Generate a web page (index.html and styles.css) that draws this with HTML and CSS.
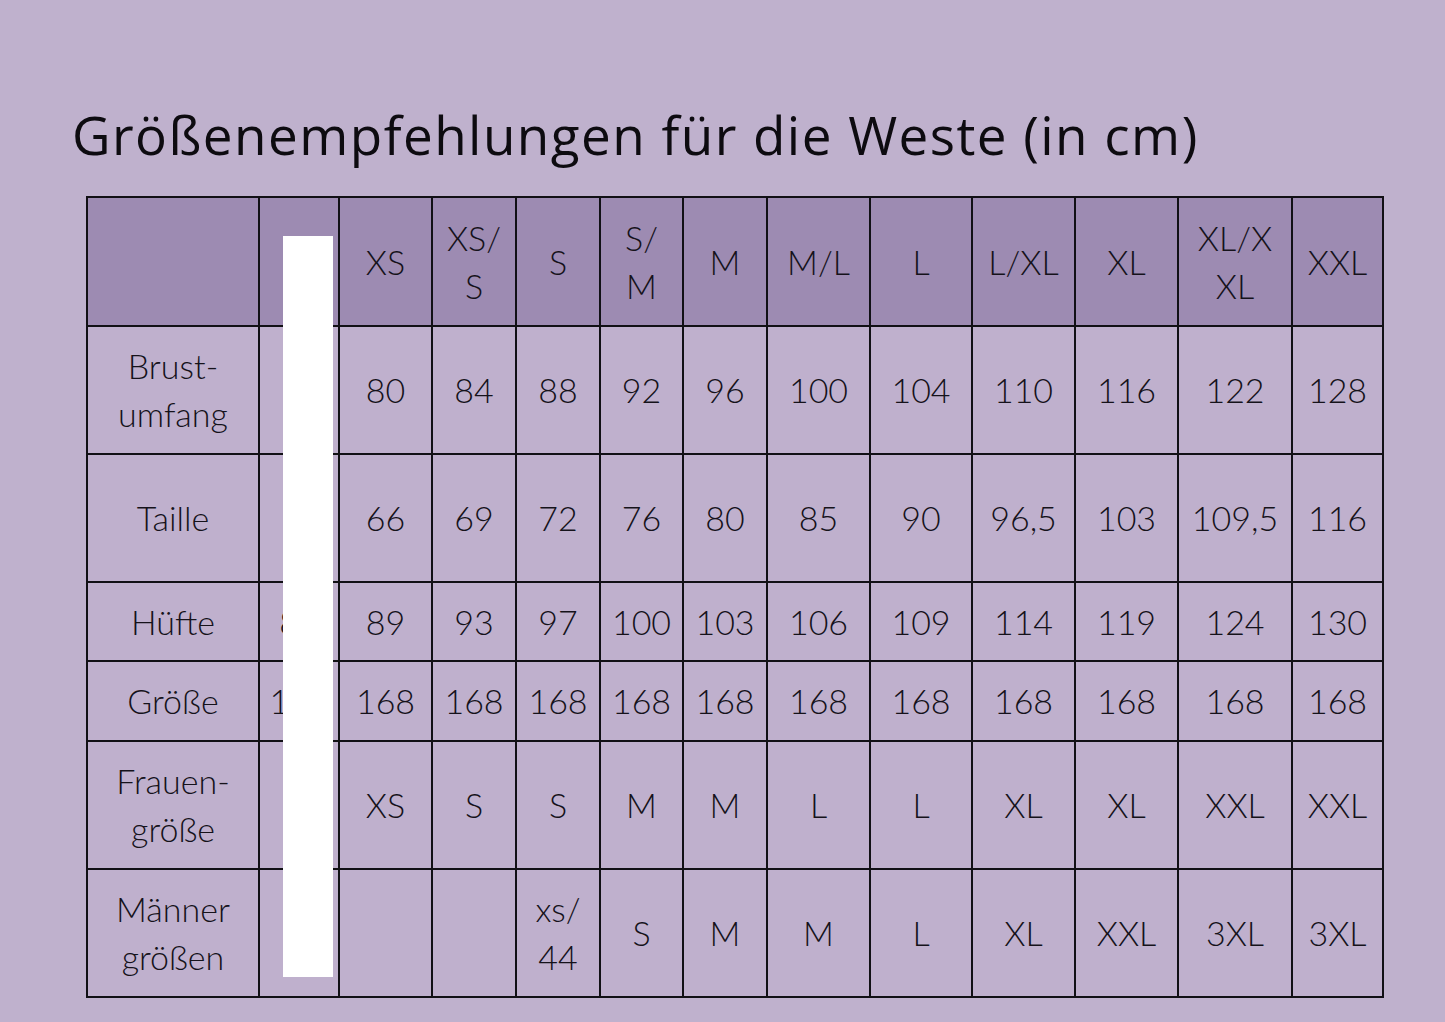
FILE: index.html
```html
<!DOCTYPE html>
<html lang="de">
<head>
<meta charset="utf-8">
<title>Größenempfehlungen</title>
<link rel="stylesheet" href="styles.css">
</head>
<body>
<main class="page">
  <h1 class="title">Größenempfehlungen für die Weste (in cm)</h1>
  <div class="table-wrap">
    <table class="sizes">
      <colgroup>
        <col class="c-label"><col class="c2"><col class="c3"><col class="c4"><col class="c5"><col class="c6"><col class="c7"><col class="c8"><col class="c9"><col class="c10"><col class="c11"><col class="c12"><col class="c13">
      </colgroup>
      <tr class="head first">
        <td></td><td></td><td>XS</td><td>XS/<br>S</td><td>S</td><td>S/<br>M</td><td>M</td><td>M/L</td><td>L</td><td>L/XL</td><td>XL</td><td>XL/X<br>XL</td><td>XXL</td>
      </tr>
      <tr class="tall">
        <td>Brust-<br>umfang</td><td></td><td>80</td><td>84</td><td>88</td><td>92</td><td>96</td><td>100</td><td>104</td><td>110</td><td>116</td><td>122</td><td>128</td>
      </tr>
      <tr class="tall">
        <td>Taille</td><td></td><td>66</td><td>69</td><td>72</td><td>76</td><td>80</td><td>85</td><td>90</td><td>96,5</td><td>103</td><td>109,5</td><td>116</td>
      </tr>
      <tr class="short">
        <td>Hüfte</td><td>85</td><td>89</td><td>93</td><td>97</td><td>100</td><td>103</td><td>106</td><td>109</td><td>114</td><td>119</td><td>124</td><td>130</td>
      </tr>
      <tr class="short2">
        <td>Größe</td><td>168</td><td>168</td><td>168</td><td>168</td><td>168</td><td>168</td><td>168</td><td>168</td><td>168</td><td>168</td><td>168</td><td>168</td>
      </tr>
      <tr class="tall">
        <td>Frauen-<br>größe</td><td></td><td>XS</td><td>S</td><td>S</td><td>M</td><td>M</td><td>L</td><td>L</td><td>XL</td><td>XL</td><td>XXL</td><td>XXL</td>
      </tr>
      <tr class="tall">
        <td>Männer<br>größen</td><td></td><td></td><td></td><td>xs/<br>44</td><td>S</td><td>M</td><td>M</td><td>L</td><td>XL</td><td>XXL</td><td>3XL</td><td>3XL</td>
      </tr>
    </table>
    <div class="mask"></div>
  </div>
</main>
</body>
</html>
```

FILE: styles.css
```css
html, body {
  margin: 0;
  padding: 0;
  background: #bfb1cd;
}
.page {
  width: 1445px;
  height: 1022px;
  box-sizing: border-box;
  padding: 103px 0 0 72px;
  background: #bfb1cd;
}
.title {
  margin: 0;
  font-family: "Open Sans", "Noto Sans", sans-serif;
  font-weight: 400;
  font-size: 53px;
  line-height: 64px;
  color: #0d0b10;
  letter-spacing: 1.45px;
  white-space: nowrap;
}
.table-wrap {
  position: relative;
  margin: 29px 0 0 14px;
  width: 1298px;
}
.sizes {
  border-collapse: collapse;
  table-layout: fixed;
  width: 1298px;
  font-family: "Lato", "Liberation Sans", sans-serif;
  font-weight: 300;
  font-size: 34px;
  line-height: 48px;
  color: #15121a;
}
.sizes td {
  border: 2px solid #111015;
  text-align: center;
  vertical-align: middle;
  padding: 0;
  background: #bfb0cd;
  white-space: nowrap;
}
.sizes .head td {
  background: #9d8bb2;
}
.sizes tr.first { height: 129px; }
.sizes tr.tall { height: 128px; }
.sizes tr.short { height: 79px; }
.sizes tr.short2 { height: 80px; }
.c-label { width: 172px; }
.c2 { width: 80px; }
.c3 { width: 93px; }
.c4 { width: 84px; }
.c5 { width: 84px; }
.c6 { width: 83px; }
.c7 { width: 84px; }
.c8 { width: 103px; }
.c9 { width: 102px; }
.c10 { width: 103px; }
.c11 { width: 103px; }
.c12 { width: 114px; }
.c13 { width: 91px; }
.mask {
  position: absolute;
  left: 197px;
  top: 40px;
  width: 50px;
  height: 741px;
  background: #ffffff;
}
```
